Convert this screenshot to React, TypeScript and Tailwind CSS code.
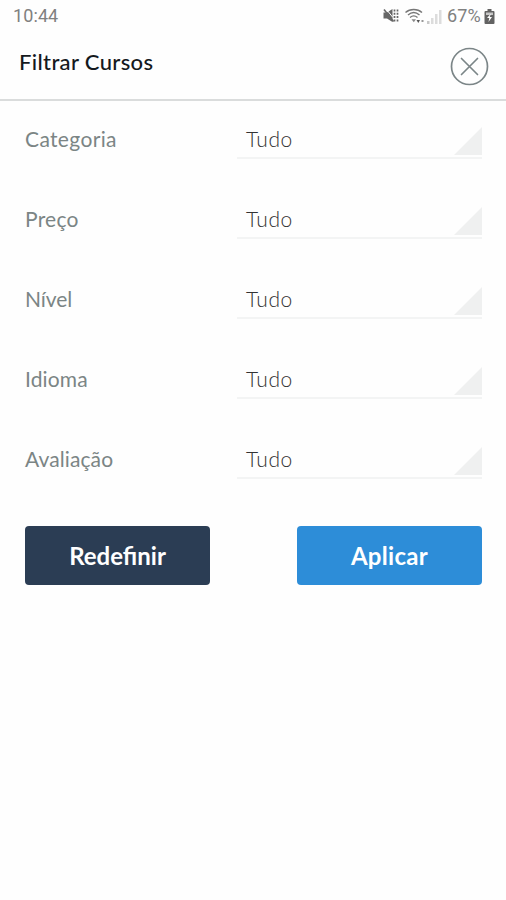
const filters = [
  { label: 'Categoria', tracking: 'tracking-[0.35px]' },
  { label: 'Preço', tracking: 'tracking-[0.25px]' },
  { label: 'Nível', tracking: 'tracking-[-0.1px]' },
  { label: 'Idioma', tracking: 'tracking-[0.15px]' },
  { label: 'Avaliação', tracking: 'tracking-[0.1px]' },
]

function MuteIcon() {
  return (
    <svg width="16" height="16" viewBox="0 0 16 16" fill="none" stroke="#666" strokeWidth="1.6">
      <path d="M0.500 4.500H4L9.500 1v13L4 10.500H0.500z" fill="#666" stroke="none" />
      <path d="M3.500 1.500l6 7.500" stroke="#fefefe" strokeWidth="1" />
      <path d="M1 1.500l9.500 12" />
      <path d="M11.500 1.500v13M14.500 1.500v13" strokeWidth="1.700" strokeDasharray="2 1.300" />
    </svg>
  )
}

function WifiIcon() {
  return (
    <svg width="20" height="16" viewBox="0 0 20 16" fill="none" stroke="#777" strokeWidth="1.4">
      <path d="M0.500 4.500c4.500-4 12-4 16.500 0M3 7c3.500-3 8-3 11.500 0M5 9.500c2.300-2 5.200-2 7.500 0" />
      <path d="M6.500 11.200h4.500l-2.200 3z" fill="#888" stroke="none" />
      <path d="M11.500 12h3.500l-1.700 3z" fill="#555" stroke="none" />
      <path d="M16.500 12h2v2h-2z" fill="#999" stroke="none" />
    </svg>
  )
}

function SignalIcon() {
  return (
    <svg width="15" height="15" viewBox="0 0 15 15" fill="#dcdcdc">
      <path d="M0 12h2.500v3H0z" fill="#c8c8c8" />
      <path d="M4 9h2.500v6H4zM8 5h2.500v10H8zM12 1h2.500v14H12z" />
    </svg>
  )
}

function BatteryIcon() {
  return (
    <svg width="11" height="15" viewBox="0 0 11 15">
      <path d="M3.500 0h4v2H9.500a1 1 0 0 1 1 1v11a1 1 0 0 1-1 1h-8a1 1 0 0 1-1-1V3a1 1 0 0 1 1-1h2z" fill="#626262" />
      <path d="M2 3.500h7V6H2z" fill="#c6c6c6" />
      <path d="M7 4.500L3 9h2.300l-.8 4L8 8H5.700z" fill="#fff" />
    </svg>
  )
}

function StatusBar() {
  return (
    <div className="flex h-8 items-center justify-between pl-[13px] pr-[11px] font-['Roboto','Noto_Sans',sans-serif] text-[#808080]">
      <span className="text-[18px] leading-8 tracking-[0.1px]">10:44</span>
      <div className="flex items-center">
        <MuteIcon />
        <div className="ml-[6px] flex"><WifiIcon /></div>
        <div className="ml-[2px] flex"><SignalIcon /></div>
        <span className="ml-[5px] text-[18px] leading-8 tracking-[0.2px]">67%</span>
        <div className="ml-[3px] flex"><BatteryIcon /></div>
      </div>
    </div>
  )
}

function Header() {
  return (
    <header className="flex h-[69px] justify-between border-b-2 border-[#dadcdc] pl-[19px] pr-[17px]">
      <h1 className="pt-[16px] text-[22px] leading-[28px] font-medium tracking-[0.35px] text-[#15191d]">Filtrar Cursos</h1>
      <button aria-label="Fechar" className="mt-[15px] size-[39px]">
        <svg width="39" height="39" viewBox="0 0 39 39" fill="none" stroke="#7b8587" strokeWidth="1.7">
          <circle cx="19.500" cy="19.500" r="18" />
          <path d="M11.500 11.500l16 16M27.500 11.500l-16 16" strokeLinecap="round" />
        </svg>
      </button>
    </header>
  )
}

export default function App() {
  return (
    <div className="min-h-[900px] w-[506px] bg-[#fefefe] font-['Lato','Noto_Sans',sans-serif]">
      <StatusBar />
      <Header />
      <main className="px-6 pt-[18px]">
        {filters.map(({ label, tracking }) => (
          <div key={label} className="flex h-20 items-start justify-between pl-px">
            <span className={`text-[21px] leading-[39px] text-[#7b8585] ${tracking}`}>{label}</span>
            <div className="flex h-10 w-[245px] items-end justify-between border-b-2 border-[#f3f4f4] pb-[2px] pl-[9px]">
              <span className="-mb-[4px] text-[21px] leading-10 font-light tracking-[0.6px] text-[#333]">Tudo</span>
              <svg width="28" height="28" viewBox="0 0 28 28">
                <path d="M28 0v28H0z" fill="#eff0f0" />
              </svg>
            </div>
          </div>
        ))}
        <div className="mt-[7px] flex justify-between pl-px">
          <button className="h-[59px] w-[185px] rounded-[4px] bg-[#2b3d54] text-[24px] font-bold text-white">
            Redefinir
          </button>
          <button className="h-[59px] w-[185px] rounded-[4px] bg-[#2d8dd8] text-[24px] font-bold tracking-[0.3px] text-white">
            Aplicar
          </button>
        </div>
      </main>
    </div>
  )
}
